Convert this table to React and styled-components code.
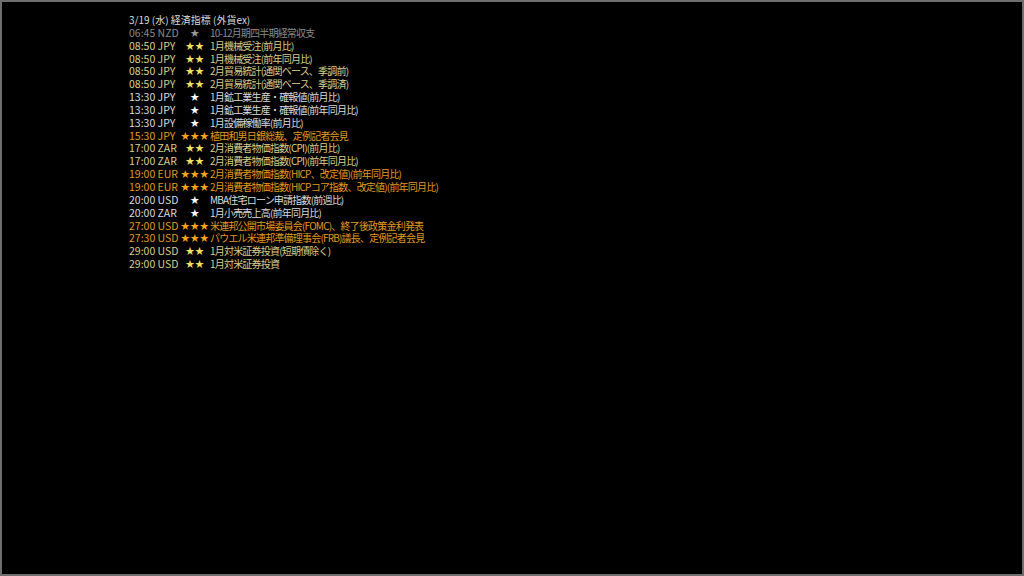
import React from 'react';
import styled, { createGlobalStyle } from 'styled-components';

const GlobalStyle = createGlobalStyle`
    html, body {
        margin: 0;
        padding: 0;
        background: #000;
    }
`;

const Screen = styled.div`
    box-sizing: border-box;
    width: 100vw;
    height: 100vh;
    background: #000;
    border: 2px solid #6e6e6e;
    padding: 12px 0 0 127px;
    font-family: "Noto Sans CJK JP", "Noto Sans", sans-serif;
    font-size: 10.5px;
    line-height: 12.85px;
    color: #dcdcdc;
`;

const Title = styled.div`
    color: #dcdcdc;
    font-size: 10px;
    letter-spacing: 0;
    white-space: nowrap;
`;

const Table = styled.div`
    display: grid;
    grid-template-columns: 51px 30px auto;
    grid-auto-rows: 12.85px;
    justify-content: start;
`;

const COLORS = {
    0: { text: '#8a8a8a', star: '#9a9a9a' },
    1: { text: '#dcdcdc', star: '#ffffff' },
    2: { text: '#dbcf8e', star: '#f2e15e' },
    3: { text: '#e39a1e', star: '#ffa51a' },
};

const Time = styled.span`
    color: ${p => COLORS[p.$level].text};
    white-space: nowrap;
`;

const Stars = styled.span`
    color: ${p => COLORS[p.$level].star};
    text-align: center;
    font-size: 9px;
    letter-spacing: 0.5px;
    white-space: nowrap;
`;

const Label = styled.span`
    color: ${p => COLORS[p.$level].text};
    font-size: 10px;
    letter-spacing: -0.8px;
    white-space: nowrap;
`;

const events = [
    ['06:45 NZD', 0, 1, '10-12月期四半期経常収支'],
    ['08:50 JPY', 2, 2, '1月機械受注(前月比)'],
    ['08:50 JPY', 2, 2, '1月機械受注(前年同月比)'],
    ['08:50 JPY', 2, 2, '2月貿易統計(通関ベース、季調前)'],
    ['08:50 JPY', 2, 2, '2月貿易統計(通関ベース、季調済)'],
    ['13:30 JPY', 1, 1, '1月鉱工業生産・確報値(前月比)'],
    ['13:30 JPY', 1, 1, '1月鉱工業生産・確報値(前年同月比)'],
    ['13:30 JPY', 1, 1, '1月設備稼働率(前月比)'],
    ['15:30 JPY', 3, 3, '植田和男日銀総裁、定例記者会見'],
    ['17:00 ZAR', 2, 2, '2月消費者物価指数(CPI)(前月比)'],
    ['17:00 ZAR', 2, 2, '2月消費者物価指数(CPI)(前年同月比)'],
    ['19:00 EUR', 3, 3, '2月消費者物価指数(HICP、改定値)(前年同月比)'],
    ['19:00 EUR', 3, 3, '2月消費者物価指数(HICPコア指数、改定値)(前年同月比)'],
    ['20:00 USD', 1, 1, 'MBA住宅ローン申請指数(前週比)'],
    ['20:00 ZAR', 1, 1, '1月小売売上高(前年同月比)'],
    ['27:00 USD', 3, 3, '米連邦公開市場委員会(FOMC)、終了後政策金利発表'],
    ['27:30 USD', 3, 3, 'パウエル米連邦準備理事会(FRB)議長、定例記者会見'],
    ['29:00 USD', 2, 2, '1月対米証券投資(短期債除く)'],
    ['29:00 USD', 2, 2, '1月対米証券投資'],
];

export default function App() {
    return (
        <>
            <GlobalStyle />
            <Screen>
                <Title>3/19 (水) 経済指標 (外貨ex)</Title>
                <Table>
                    {events.map(([time, level, stars, label], i) => (
                        <React.Fragment key={i}>
                            <Time $level={level}>{time}</Time>
                            <Stars $level={level}>{'★'.repeat(stars)}</Stars>
                            <Label $level={level}>{label}</Label>
                        </React.Fragment>
                    ))}
                </Table>
            </Screen>
        </>
    );
}
